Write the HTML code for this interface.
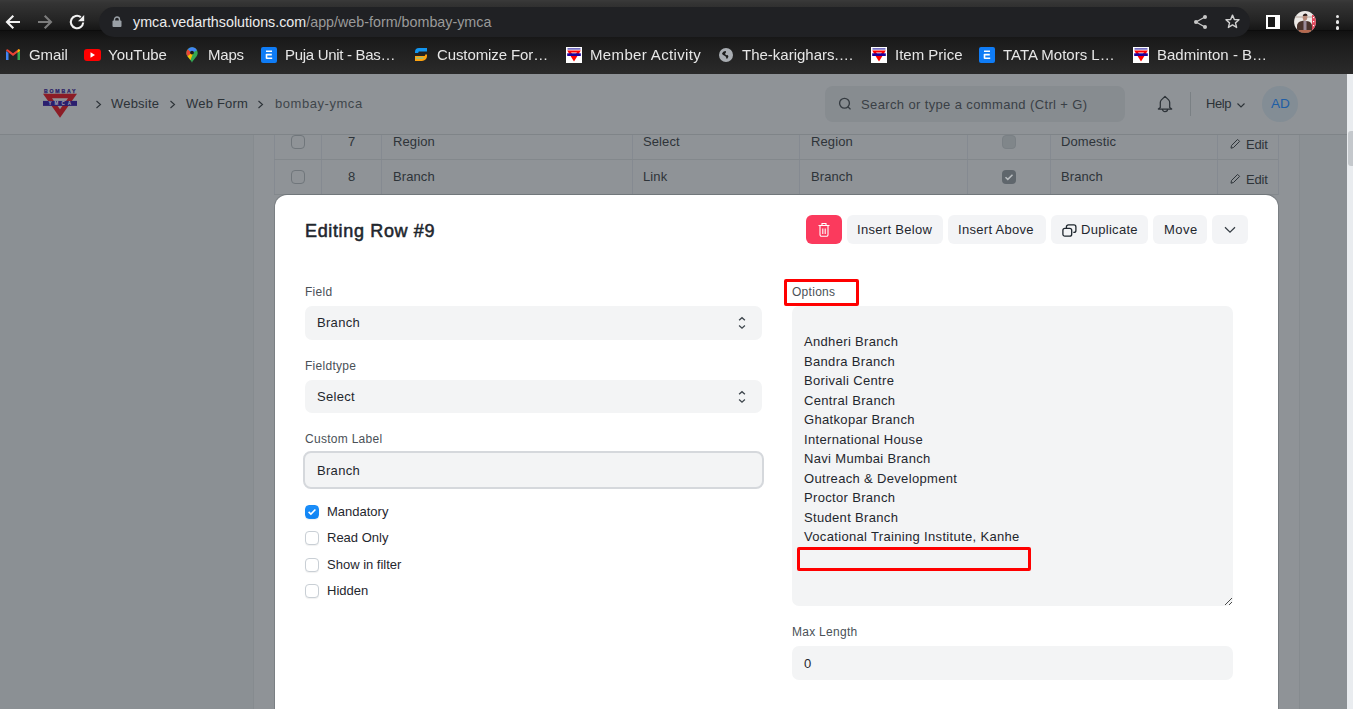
<!DOCTYPE html>
<html><head><meta charset="utf-8">
<style>
*{box-sizing:border-box;margin:0;padding:0}
html,body{width:1353px;height:709px;overflow:hidden;background:#8b9094;font-family:"Liberation Sans",sans-serif}
.a{position:absolute}
.t{position:absolute;white-space:nowrap;line-height:1}
/* chrome */
#tb{left:0;top:0;width:1353px;height:31px;background:linear-gradient(#3a3a3a 0px,#343434 3px,#242424 20px,#161616 30px)}
#tbline{left:0;top:30px;width:1353px;height:1px;background:#0c0c0c}
#bm{left:0;top:31px;width:1353px;height:43px;background:linear-gradient(#111 0px,#1b1b1b 10px,#2a2a2a 42px)}
#omni{left:99px;top:7px;width:1151px;height:30px;border-radius:15px;background:#202124}
.bmt{color:#e6e6e6;font-size:15px;top:47px;will-change:transform}
/* page */
#left{left:254px;top:134px;width:1045px;height:575px;background:#8f9397}
#pline{left:253px;top:135px;width:1px;height:574px;background:#868b8f}
#pline2{left:1299px;top:135px;width:1px;height:574px;background:#868b8f}
#nav{left:0;top:74px;width:1347px;height:61px;background:#8f9397;border-bottom:1px solid #7f8488}
#sb{left:1347px;top:74px;width:6px;height:635px;background:#e9ecef}
#thumb{left:1348px;top:131px;width:5px;height:35px;background:#c4c8cc;border-radius:3px 0 0 3px}
.nt{color:#2c3237;font-size:13px;letter-spacing:.2px}
.cell{color:#2e3439;font-size:13px;letter-spacing:.1px}
.vl{position:absolute;width:1px;background:#858a91}
.hl{position:absolute;height:1px;background:#83888c}
/* modal */
#modal{left:275px;top:195px;width:1003px;height:540px;background:#fff;border-radius:12px;box-shadow:0 0 0 1px rgba(60,66,72,.25)}
.btn{position:absolute;top:215px;height:29px;border-radius:6px;background:#f3f4f6;color:#1f272e;font-size:13px;letter-spacing:.3px;line-height:29px;padding:0 10px;white-space:nowrap}
.lbl{color:#4a5157;font-size:12px;letter-spacing:.28px}
.inp{position:absolute;background:#f3f4f5;border-radius:7px}
.it{color:#1f272e;font-size:13px;letter-spacing:.3px}
.cb{position:absolute;left:305px;width:14px;height:14px;border-radius:4px;border:1px solid #c9cfd5;background:#fff;box-shadow:0 1px 1px rgba(0,0,0,.06)}
.opt{color:#1f272e;font-size:13px;letter-spacing:.33px}
.red{position:absolute;border:3px solid #f00;border-radius:2px}
</style></head><body>
<!-- chrome toolbar -->
<div class="a" id="tb"></div>
<div class="a" id="tbline"></div>
<div class="a" id="bm"></div>
<div class="a" id="omni"></div>
<!-- back/forward/reload -->
<svg class="a" style="left:5px;top:14px" width="16" height="16" viewBox="0 0 16 16"><path d="M15 8H2M8.3 1.7L2 8l6.3 6.3" stroke="#f2f2f2" stroke-width="2.1" fill="none"/></svg>
<svg class="a" style="left:37px;top:14px" width="16" height="16" viewBox="0 0 16 16"><path d="M1 8h13M7.7 1.7L14 8l-6.3 6.3" stroke="#7c7c7c" stroke-width="2.1" fill="none"/></svg>
<svg class="a" style="left:69px;top:14px" width="16" height="16" viewBox="0 0 16 16"><path d="M14.2 8.5A6.2 6.2 0 1 1 11.8 3.1" stroke="#f2f2f2" stroke-width="2.1" fill="none"/><path d="M15.2 1v6.2H9z" fill="#f2f2f2"/></svg>
<!-- lock -->
<svg class="a" style="left:112px;top:16px" width="10" height="11" viewBox="0 0 10 11"><rect x="0.5" y="4.5" width="9" height="6.5" rx="1" fill="#9aa0a6"/><path d="M2.5 5V3.5a2.5 2.5 0 0 1 5 0V5" stroke="#9aa0a6" stroke-width="1.4" fill="none"/></svg>
<div class="t" style="left:133px;top:15px;font-size:14.3px;color:#ececec">ymca.vedarthsolutions.com<span style="color:#9a9a9a">/app/web-form/bombay-ymca</span></div>
<!-- share/star -->
<svg class="a" style="left:1193px;top:14px" width="16" height="16" viewBox="0 0 16 16"><circle cx="12" cy="3" r="2" fill="#c8c8c8"/><circle cx="3" cy="8" r="2" fill="#c8c8c8"/><circle cx="12" cy="13" r="2" fill="#c8c8c8"/><path d="M12 3L3 8l9 5" stroke="#c8c8c8" stroke-width="1.3" fill="none"/></svg>
<svg class="a" style="left:1224px;top:13px" width="17" height="17" viewBox="0 0 24 24"><path d="M12 3l2.6 6.1 6.6.5-5 4.3 1.6 6.5L12 16.9 6.2 20.4l1.6-6.5-5-4.3 6.6-.5z" stroke="#d0d0d0" stroke-width="2" fill="none" stroke-linejoin="round"/></svg>
<div class="a" style="left:1266px;top:15px;width:14px;height:14px;background:#fff"></div>
<div class="a" style="left:1268px;top:17px;width:7px;height:10px;background:#1a1a1a"></div>
<!-- avatar -->
<svg class="a" style="left:1294px;top:11px" width="22" height="22" viewBox="0 0 22 22"><defs><clipPath id="av"><circle cx="11" cy="11" r="10.9"/></clipPath></defs><g clip-path="url(#av)"><rect width="22" height="22" fill="#ece9e6"/><rect x="0" y="5" width="22" height="2" fill="#cfc6c0"/><rect x="18" y="4" width="4" height="18" fill="#e0485c"/><rect x="19" y="6" width="1.2" height="1.2" fill="#fff"/><rect x="19" y="10" width="1.2" height="1.2" fill="#fff"/><rect x="19" y="14" width="1.2" height="1.2" fill="#fff"/><path d="M3 22V15q0-3 3-4.5l4-1 5 1q3 1.5 3 4.5V22z" fill="#4a332c"/><rect x="9.5" y="10" width="3" height="10" fill="#9a8a98"/><ellipse cx="11" cy="6.5" rx="2.3" ry="3" fill="#b98a78"/><path d="M8.7 5q.5-2.6 2.5-2.6t2.5 2.4z" fill="#2a1c18"/><rect x="5" y="19" width="12" height="3" fill="#b56a50"/></g></svg>
<div class="a" style="left:1335.5px;top:14.7px;width:3.8px;height:3.8px;border-radius:50%;background:#e8e8e8"></div>
<div class="a" style="left:1335.5px;top:20.4px;width:3.8px;height:3.8px;border-radius:50%;background:#e8e8e8"></div>
<div class="a" style="left:1335.5px;top:25.8px;width:3.8px;height:3.8px;border-radius:50%;background:#e8e8e8"></div>

<!-- bookmarks -->
<svg class="a" style="left:6px;top:49px" width="14" height="11" viewBox="0 0 14 11"><path d="M0 2v9h2.5V4z" fill="#4285f4"/><path d="M11.5 4v7H14V2z" fill="#34a853"/><path d="M0 1.5L7 7l7-5.5V1.2Q13 0 12 .5L7 4.3 2 .5Q1 0 0 1.2z" fill="#ea4335"/><path d="M11.5 2.5V4L14 2V1.2Q13.5 0 12 .5z" fill="#fbbc04"/></svg>
<svg class="a" style="left:84px;top:49px" width="17" height="12" viewBox="0 0 17 12"><rect width="17" height="12" rx="3" fill="#f00"/><path d="M6.5 3.2v5.6L11 6z" fill="#fff"/></svg>
<svg class="a" style="left:186px;top:47px" width="12" height="16" viewBox="0 0 12 16"><path d="M6 0.3a5.7 5.7 0 0 0-5.7 5.7c0 3.6 4.2 6 5.7 9.7 1.5-3.7 5.7-6.1 5.7-9.7A5.7 5.7 0 0 0 6 0.3z" fill="#34a853"/><path d="M1.8 2.2A5.7 5.7 0 0 0 .3 6c0 1.2.5 2.3 1.2 3.3L6 6z" fill="#ea4335"/><path d="M1.5 9.3c1 1.3 2.2 2.5 3 3.8L8 4z" fill="#fbbc04"/><path d="M1.8 2.2A5.7 5.7 0 0 1 11 3.2L6 6z" fill="#4285f4"/><circle cx="6" cy="5.6" r="1.9" fill="#1a1a1a"/></svg>
<svg class="a" style="left:261px;top:47px" width="16" height="16" viewBox="0 0 16 16"><rect width="16" height="16" rx="2" fill="#0f7cf6"/><path d="M5 4.3h6M5.2 7.6h5.6M5.2 11.3h6" stroke="#fff" stroke-width="1.6"/><path d="M5.5 7v4.5" stroke="#fff" stroke-width="1.6"/></svg>
<svg class="a" style="left:414px;top:47px" width="14" height="15" viewBox="0 0 14 15"><path d="M1 6V5a4 4 0 0 1 4-4h8v3.5H5.2A1 1 0 0 0 4.3 5.5V6z" fill="#1396f0"/><path d="M1 9h9.2a1 1 0 0 0 1-1V7.5H13V9a5 5 0 0 1-5 5H1z" fill="#ffa30f"/><path d="M2 11h7.5" stroke="#2de0f0" stroke-width=".8"/></svg>
<svg class="a" style="left:566px;top:47px" width="16" height="16" viewBox="0 0 16 16"><rect width="16" height="16" fill="#fff"/><rect x="1.5" y="1.2" width="13" height="1.4" fill="#2b1fa0" opacity=".8"/><path d="M1.2 3.5h13.6L8 14.5z" fill="#f00"/><path d="M5 5.5h6L8 9z" fill="#fff"/><rect x="1.2" y="6.3" width="13.6" height="2.7" fill="#20009a"/></svg>
<svg class="a" style="left:719px;top:48px" width="14" height="14" viewBox="0 0 14 14"><circle cx="7" cy="7" r="7" fill="#a9adb2"/><path d="M3 5.5Q4 2.8 6.5 3q1 .6.3 1.8-1.2.6-.3 2 1 .8 2.4.3 1.2 1.5-.5 3.5-1.5.2-1.2-1.2Q6.8 8.4 5 7.6 3.5 7 3 5.5z" fill="#1d1d1d"/></svg>
<svg class="a" style="left:871px;top:47px" width="16" height="16" viewBox="0 0 16 16"><rect width="16" height="16" fill="#fff"/><rect x="1.5" y="1.2" width="13" height="1.4" fill="#2b1fa0" opacity=".8"/><path d="M1.2 3.5h13.6L8 14.5z" fill="#f00"/><path d="M5 5.5h6L8 9z" fill="#fff"/><rect x="1.2" y="6.3" width="13.6" height="2.7" fill="#20009a"/></svg>
<svg class="a" style="left:979px;top:47px" width="16" height="16" viewBox="0 0 16 16"><rect width="16" height="16" rx="2" fill="#0f7cf6"/><path d="M5 4.3h6M5.2 7.6h5.6M5.2 11.3h6" stroke="#fff" stroke-width="1.6"/><path d="M5.5 7v4.5" stroke="#fff" stroke-width="1.6"/></svg>
<svg class="a" style="left:1133px;top:47px" width="16" height="16" viewBox="0 0 16 16"><rect width="16" height="16" fill="#fff"/><rect x="1.5" y="1.2" width="13" height="1.4" fill="#2b1fa0" opacity=".8"/><path d="M1.2 3.5h13.6L8 14.5z" fill="#f00"/><path d="M5 5.5h6L8 9z" fill="#fff"/><rect x="1.2" y="6.3" width="13.6" height="2.7" fill="#20009a"/></svg>

<div class="t bmt" style="left:29px;letter-spacing:-.1px">Gmail</div>
<div class="t bmt" style="left:108px">YouTube</div>
<div class="t bmt" style="left:208px;letter-spacing:-.2px">Maps</div>
<div class="t bmt" style="left:285px;letter-spacing:-.3px">Puja Unit - Bas…</div>
<div class="t bmt" style="left:437px;letter-spacing:-.1px">Customize For…</div>
<div class="t bmt" style="left:590px;letter-spacing:.35px">Member Activity</div>
<div class="t bmt" style="left:742px">The-karighars.…</div>
<div class="t bmt" style="left:895px">Item Price</div>
<div class="t bmt" style="left:1003px">TATA Motors L…</div>
<div class="t bmt" style="left:1157px">Badminton - B…</div>

<!-- page -->
<div class="a" id="left"></div>
<div class="a" id="nav"></div>
<div class="a" id="pline"></div>
<div class="a" id="pline2"></div>
<div class="a" id="sb"></div>
<div class="a" id="thumb"></div>

<!-- table rows -->
<div class="vl" style="left:274px;top:135px;height:60px"></div>
<div class="vl" style="left:321px;top:135px;height:60px"></div>
<div class="vl" style="left:381px;top:135px;height:60px"></div>
<div class="vl" style="left:632px;top:135px;height:60px"></div>
<div class="vl" style="left:799px;top:135px;height:60px"></div>
<div class="vl" style="left:967px;top:135px;height:60px"></div>
<div class="vl" style="left:1050px;top:135px;height:60px"></div>
<div class="vl" style="left:1217px;top:135px;height:60px"></div>
<div class="vl" style="left:1278px;top:135px;height:60px"></div>
<div class="hl" style="left:274px;top:159px;width:1004px"></div>
<div class="hl" style="left:274px;top:194px;width:1004px"></div>

<div class="a" style="left:291px;top:135px;width:14px;height:14px;border:1px solid #70767b;border-radius:4px"></div>
<div class="a" style="left:291px;top:170px;width:14px;height:14px;border:1px solid #70767b;border-radius:4px"></div>
<div class="t cell" style="left:348px;top:135px">7</div>
<div class="t cell" style="left:348px;top:170px">8</div>
<div class="t cell" style="left:393px;top:135px">Region</div>
<div class="t cell" style="left:393px;top:170px">Branch</div>
<div class="t cell" style="left:643px;top:135px">Select</div>
<div class="t cell" style="left:643px;top:170px">Link</div>
<div class="t cell" style="left:811px;top:135px">Region</div>
<div class="t cell" style="left:811px;top:170px">Branch</div>
<div class="a" style="left:1002px;top:135px;width:14px;height:14px;background:#80868a;border-radius:4px;border:1px solid #7a8085"></div>
<div class="a" style="left:1002px;top:170px;width:14px;height:14px;background:#5f666c;border-radius:4px"></div>
<svg class="a" style="left:1002px;top:170px" width="14" height="14" viewBox="0 0 14 14"><path d="M3.5 7.2l2.3 2.2 4.7-4.7" stroke="#b9bdc0" stroke-width="1.5" fill="none"/></svg>
<div class="t cell" style="left:1061px;top:135px">Domestic</div>
<div class="t cell" style="left:1061px;top:170px">Branch</div>
<svg class="a" style="left:1230px;top:138px" width="11" height="11" viewBox="0 0 11 11"><path d="M1 10.2l.5-2.7L7.6 1.4l2 2-6.1 6.1z" stroke="#2e3439" stroke-width="1" fill="none" stroke-linejoin="round"/></svg>
<svg class="a" style="left:1230px;top:173px" width="11" height="11" viewBox="0 0 11 11"><path d="M1 10.2l.5-2.7L7.6 1.4l2 2-6.1 6.1z" stroke="#2e3439" stroke-width="1" fill="none" stroke-linejoin="round"/></svg>
<div class="t cell" style="left:1246px;top:138px;letter-spacing:-.15px">Edit</div>
<div class="t cell" style="left:1246px;top:173px;letter-spacing:-.15px">Edit</div>

<!-- navbar content -->
<svg class="a" style="left:42px;top:88px" width="36" height="31" viewBox="0 0 36 31">
<text x="18.6" y="4.7" font-family="Liberation Sans" font-weight="bold" font-size="5.2" fill="#2a2166" text-anchor="middle" letter-spacing="1.75" stroke="#2a2166" stroke-width=".25">BOMBAY</text>
<path d="M1 5.7h34L18 29.8z" fill="#8c1d26"/>
<path d="M10 10.2h16L18 21.2z" fill="#8f9397"/>
<rect x="1" y="12.9" width="34" height="5" fill="#2a1f6e"/>
<text x="19.3" y="17.3" font-family="Liberation Sans" font-weight="bold" font-size="4.6" fill="#a7aab2" text-anchor="middle" letter-spacing="3">YMCA</text>
</svg>
<svg class="a" style="left:95px;top:100px" width="7" height="9" viewBox="0 0 7 9"><path d="M1.5 1l4 3.5-4 3.5" stroke="#2c3237" stroke-width="1.1" fill="none"/></svg>
<svg class="a" style="left:169px;top:100px" width="7" height="9" viewBox="0 0 7 9"><path d="M1.5 1l4 3.5-4 3.5" stroke="#2c3237" stroke-width="1.1" fill="none"/></svg>
<svg class="a" style="left:257px;top:100px" width="7" height="9" viewBox="0 0 7 9"><path d="M1.5 1l4 3.5-4 3.5" stroke="#2c3237" stroke-width="1.1" fill="none"/></svg>
<div class="t nt" style="left:111px;top:97px">Website</div>
<div class="t nt" style="left:186px;top:97px">Web Form</div>
<div class="t nt" style="left:275px;top:97px;color:#3f464b;letter-spacing:.55px">bombay-ymca</div>

<div class="a" style="left:825px;top:86px;width:300px;height:36px;border-radius:8px;background:#878c90"></div>
<svg class="a" style="left:838px;top:97px" width="14" height="14" viewBox="0 0 14 14"><circle cx="6.5" cy="6.2" r="4.9" stroke="#353b41" stroke-width="1.35" fill="none"/><path d="M9.9 9.7l2.6 2.7" stroke="#353b41" stroke-width="1.35"/></svg>
<div class="t nt" style="left:861px;top:98px;color:#3a4046;letter-spacing:.37px">Search or type a command (Ctrl + G)</div>
<svg class="a" style="left:1157px;top:95px" width="16" height="18" viewBox="0 0 16 18"><path d="M8 1.4L4.4 4.9Q3.3 6 3.3 7.6V12.6L1.3 14H14.7L12.7 12.6V7.6Q12.7 6 11.6 4.9Z" stroke="#2c3237" stroke-width="1.25" fill="none" stroke-linejoin="round"/><path d="M5.4 14a2.6 2.6 0 0 0 5.2 0" stroke="#2c3237" stroke-width="1.25" fill="none"/></svg>
<div class="a" style="left:1190px;top:92px;width:1px;height:24px;background:#7a8084"></div>
<div class="t nt" style="left:1206px;top:97px;letter-spacing:-.4px">Help</div>
<svg class="a" style="left:1236px;top:101.7px" width="10" height="7" viewBox="0 0 10 7"><path d="M1.5 1.5l3.5 3.5 3.5-3.5" stroke="#2c3237" stroke-width="1.1" fill="none"/></svg>
<div class="a" style="left:1262px;top:86px;width:36px;height:36px;border-radius:50%;background:#838d95"></div>
<div class="t" style="left:1271px;top:97px;font-size:13.6px;color:#1f5ea6">AD</div>

<!-- modal -->
<div class="a" id="modal"></div>
<div class="t" style="left:305px;top:222px;font-size:18px;color:#1f272e;-webkit-text-stroke:.55px #1f272e;letter-spacing:.65px">Editing Row #9</div>
<div class="a" style="left:806px;top:215px;width:36px;height:29px;border-radius:6px;background:#fb3a5d"></div>
<svg class="a" style="left:817px;top:222px" width="14" height="16" viewBox="0 0 14 16"><path d="M3 4v8.8a1.5 1.5 0 0 0 1.5 1.5h5a1.5 1.5 0 0 0 1.5-1.5V4" stroke="#fff" stroke-width="1.1" fill="none"/><path d="M1.5 3.5h11M5 3.3V1.5h4v1.8M5.8 6.5v5.5M8.2 6.5v5.5" stroke="#fff" stroke-width="1.1" fill="none"/></svg>
<div class="btn" style="left:847px;width:96px">Insert Below</div>
<div class="btn" style="left:948px;width:98px">Insert Above</div>
<div class="btn" style="left:1051px;width:97px;padding-left:30px">Duplicate</div>
<svg class="a" style="left:1062px;top:224px" width="15" height="13" viewBox="0 0 15 13"><rect x="0.9" y="4.3" width="8.8" height="7.9" rx="2" stroke="#1f272e" stroke-width="1.3" fill="none"/><path d="M4.4 4.1V2.9a2 2 0 0 1 2-2h5.5a2 2 0 0 1 2 2v3.5a2 2 0 0 1-2 2h-.6" stroke="#1f272e" stroke-width="1.3" fill="none"/></svg>
<div class="btn" style="left:1153px;width:54px;padding-left:11px;letter-spacing:.5px">Move</div>
<div class="btn" style="left:1212px;width:36px"></div>
<svg class="a" style="left:1224px;top:226px" width="12" height="8" viewBox="0 0 12 8"><path d="M1 1.3L6 6.2l5-4.9" stroke="#353c43" stroke-width="1.2" fill="none"/></svg>

<!-- left column fields -->
<div class="t lbl" style="left:305px;top:286px">Field</div>
<div class="inp" style="left:305px;top:306px;width:457px;height:34px"></div>
<div class="t it" style="left:317px;top:316px">Branch</div>
<svg class="a" style="left:737px;top:315px" width="10" height="16" viewBox="0 0 10 16"><path d="M2.1 5.3l2.9-2.6 2.9 2.6M2.1 10.6l2.9 2.6 2.9-2.6" stroke="#3d454c" stroke-width="1.3" fill="none"/></svg>

<div class="t lbl" style="left:305px;top:360px">Fieldtype</div>
<div class="inp" style="left:305px;top:380px;width:457px;height:33px"></div>
<div class="t it" style="left:317px;top:390px">Select</div>
<svg class="a" style="left:737px;top:389px" width="10" height="16" viewBox="0 0 10 16"><path d="M2.1 5.3l2.9-2.6 2.9 2.6M2.1 10.6l2.9 2.6 2.9-2.6" stroke="#3d454c" stroke-width="1.3" fill="none"/></svg>

<div class="t lbl" style="left:305px;top:433px">Custom Label</div>
<div class="inp" style="left:303px;top:451px;width:461px;height:38px;border:2px solid #d5d8dc;border-radius:8px"></div>
<div class="t it" style="left:317px;top:464px">Branch</div>

<div class="cb" style="top:505px;background:linear-gradient(#1b8ffb,#0f82f2);border-color:#168af7"></div>
<svg class="a" style="left:305px;top:505px" width="14" height="14" viewBox="0 0 14 14"><path d="M3.6 6.9l2.3 2.2 4.5-4.6" stroke="#fff" stroke-width="1.6" fill="none"/></svg>
<div class="t it" style="left:327px;top:505px;letter-spacing:0">Mandatory</div>
<div class="cb" style="top:531px"></div>
<div class="t it" style="left:327px;top:531px;letter-spacing:0">Read Only</div>
<div class="cb" style="top:558px"></div>
<div class="t it" style="left:327px;top:558px;letter-spacing:0">Show in filter</div>
<div class="cb" style="top:584px"></div>
<div class="t it" style="left:327px;top:584px;letter-spacing:0">Hidden</div>

<!-- right column -->
<div class="t lbl" style="left:792px;top:286px">Options</div>
<div class="inp" style="left:792px;top:306px;width:441px;height:300px"></div>
<svg class="a" style="left:1222px;top:595px" width="12" height="12" viewBox="0 0 12 12" fill="#4a4a4a" shape-rendering="crispEdges"><rect x="3" y="9" width="1" height="1"/><rect x="4" y="8" width="1" height="1"/><rect x="5" y="7" width="1" height="1"/><rect x="6" y="6" width="1" height="1"/><rect x="7" y="5" width="1" height="1"/><rect x="8" y="4" width="1" height="1"/><rect x="9" y="3" width="1" height="1"/><rect x="7" y="9" width="1" height="1"/><rect x="8" y="8" width="1" height="1"/><rect x="9" y="7" width="1" height="1"/></svg>
<div class="a" style="left:804px;top:332px;line-height:19.5px">
<div class="opt">Andheri Branch</div>
<div class="opt">Bandra Branch</div>
<div class="opt">Borivali Centre</div>
<div class="opt">Central Branch</div>
<div class="opt">Ghatkopar Branch</div>
<div class="opt">International House</div>
<div class="opt">Navi Mumbai Branch</div>
<div class="opt">Outreach &amp; Development</div>
<div class="opt">Proctor Branch</div>
<div class="opt">Student Branch</div>
<div class="opt">Vocational Training Institute, Kanhe</div>
</div>
<div class="red" style="left:784px;top:279px;width:75px;height:27px"></div>
<div class="red" style="left:797px;top:547px;width:234px;height:24px"></div>

<div class="t lbl" style="left:792px;top:626px">Max Length</div>
<div class="inp" style="left:792px;top:646px;width:441px;height:34px"></div>
<div class="t it" style="left:804px;top:657px">0</div>
</body></html>
